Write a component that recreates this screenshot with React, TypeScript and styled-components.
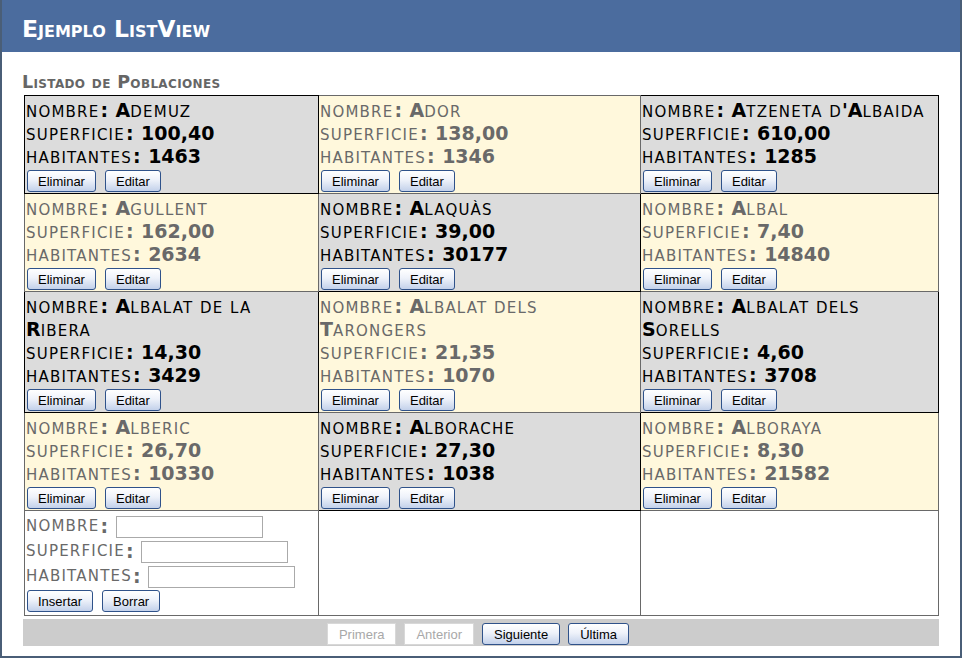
import React from "react";
import styled, { createGlobalStyle, css } from "styled-components";

const GlobalStyle = createGlobalStyle`
  html, body { margin: 0; padding: 0; background: #fff; }
  body { font-family: "DejaVu Sans", Verdana, sans-serif; }
`;

const Page = styled.div`
  width: 962px;
  height: 658px;
  box-sizing: border-box;
  border: 2px solid #4a5e77;
  border-top: none;
  background: #fff;
  overflow: hidden;
`;

const Header = styled.header`
  height: 52px;
  box-sizing: border-box;
  background: #4b6c9e;
  padding: 18px 0 0 20px;
`;

const Title = styled.h1`
  margin: 0;
  font-family: "DejaVu Sans", Verdana, sans-serif;
  font-size: 23.5px;
  line-height: 23px;
  font-weight: bold;
  font-variant: small-caps;
  color: #fff;
`;

const Main = styled.main`
  padding: 20px 0 0 20px;
`;

const SectionTitle = styled.h2`
  margin: 0 0 3px;
  font-size: 17.5px;
  letter-spacing: 0.35px;
  line-height: 20px;
  font-weight: bold;
  font-variant: small-caps;
  color: #666;
`;

const Grid = styled.table`
  border-collapse: collapse;
  table-layout: fixed;
  width: 914px;
  margin-left: 2px;
  background: #fff;
`;

type Kind = "item" | "alt" | "blank";

const Cell = styled.td<{ $kind: Kind }>`
  vertical-align: top;
  padding: 3px 4px 1px 1px;
  border: 1px solid currentColor;
  ${({ $kind }) =>
    $kind === "item"
      ? css`
          background: #dcdcdc;
          color: #000;
        `
      : $kind === "alt"
      ? css`
          background: #fff8dc;
          color: #696969;
        `
      : css`
          background: #fff;
          color: #696969;
        `}
`;

const Field = styled.div`
  font-size: 19px;
  line-height: 23px;
`;

const Small = styled.span`
  font-size: 15px;
  line-height: 15px;
  font-weight: normal;
  text-transform: uppercase;
  letter-spacing: 1.2px;
`;

const Strong = styled.span`
  font-weight: bold;
`;

const Colon = styled.span`
  font-weight: bold;
  padding: 0 1px;
`;

const Actions = styled.div<{ $top?: number; $bottom?: number }>`
  display: flex;
  gap: 9px;
  padding: ${({ $top = 2, $bottom = 0 }) => `${$top}px 0 ${$bottom}px 1px`};
`;

const Btn = styled.button`
  height: 22px;
  box-sizing: border-box;
  margin: 0;
  padding: 0 10px;
  font-family: "Liberation Sans", Arial, sans-serif;
  font-size: 13px;
  color: #000;
  border: 1px solid #2f528a;
  border-radius: 3px;
  background: linear-gradient(to bottom, #ffffff 0%, #eef2fa 45%, #c3d1ea 100%);
  cursor: pointer;
  &:disabled {
    background: #fff;
    border: 1px solid #d8d8d8;
    border-radius: 0;
    color: #a8a8a8;
    cursor: default;
  }
`;

const PagerBtn = styled(Btn)`
  padding: 0 11px;
`;

const InsertField = styled.div`
  display: flex;
  align-items: center;
  height: 25px;
  font-size: 19px;
  line-height: 23px;
  white-space: pre;
`;

const TextInput = styled.input`
  width: 147px;
  height: 22px;
  box-sizing: border-box;
  margin: 0;
  border: 1px solid #aaa;
  padding: 0 3px;
  font-family: "DejaVu Sans", Verdana, sans-serif;
  font-size: 13px;
`;

const Pager = styled.div`
  width: 916px;
  height: 27px;
  box-sizing: border-box;
  margin: 3px 0 0 1px;
  background: #ccc;
  display: flex;
  justify-content: center;
  gap: 8px;
  padding: 4px 6px 1px 0;
`;

function SmallCaps({ text }: { text: string }) {
  const runs = text.match(/\p{Ll}+|[^\p{Ll}]+/gu) || [];
  return (
    <>
      {runs.map((r, i) =>
        /\p{Ll}/u.test(r[0]) ? (
          <Small key={i}>{r}</Small>
        ) : (
          <Strong key={i}>{r}</Strong>
        )
      )}
    </>
  );
}

type Poblacion = { nombre: string; superficie: string; habitantes: string };

const data: Poblacion[] = [
  { nombre: "Ademuz", superficie: "100,40", habitantes: "1463" },
  { nombre: "Ador", superficie: "138,00", habitantes: "1346" },
  { nombre: "Atzeneta d'Albaida", superficie: "610,00", habitantes: "1285" },
  { nombre: "Agullent", superficie: "162,00", habitantes: "2634" },
  { nombre: "Alaquàs", superficie: "39,00", habitantes: "30177" },
  { nombre: "Albal", superficie: "7,40", habitantes: "14840" },
  { nombre: "Albalat de la Ribera", superficie: "14,30", habitantes: "3429" },
  { nombre: "Albalat dels Tarongers", superficie: "21,35", habitantes: "1070" },
  { nombre: "Albalat dels Sorells", superficie: "4,60", habitantes: "3708" },
  { nombre: "Alberic", superficie: "26,70", habitantes: "10330" },
  { nombre: "Alborache", superficie: "27,30", habitantes: "1038" },
  { nombre: "Alboraya", superficie: "8,30", habitantes: "21582" },
];

function ItemCell({ p, alt }: { p: Poblacion; alt: boolean }) {
  return (
    <Cell $kind={alt ? "alt" : "item"}>
      <Field>
        <Small>nombre</Small>
        <Colon>:</Colon>
        <Strong> </Strong>
        <SmallCaps text={p.nombre} />
      </Field>
      <Field>
        <Small>superficie</Small>
        <Colon>:</Colon>
        <Strong> {p.superficie}</Strong>
      </Field>
      <Field>
        <Small>habitantes</Small>
        <Colon>:</Colon>
        <Strong> {p.habitantes}</Strong>
      </Field>
      <Actions>
        <Btn>Eliminar</Btn>
        <Btn>Editar</Btn>
      </Actions>
    </Cell>
  );
}

function InsertCell() {
  return (
    <Cell $kind="blank">
      <InsertField>
        <Small>nombre</Small>
        <Colon>:</Colon>
        <Strong> </Strong>
        <TextInput type="text" />
      </InsertField>
      <InsertField>
        <Small>superficie</Small>
        <Colon>:</Colon>
        <Strong> </Strong>
        <TextInput type="text" />
      </InsertField>
      <InsertField>
        <Small>habitantes</Small>
        <Colon>:</Colon>
        <Strong> </Strong>
        <TextInput type="text" />
      </InsertField>
      <Actions $top={1} $bottom={2}>
        <Btn>Insertar</Btn>
        <Btn>Borrar</Btn>
      </Actions>
    </Cell>
  );
}

export default function App() {
  const rows: Poblacion[][] = [];
  for (let i = 0; i < data.length; i += 3) rows.push(data.slice(i, i + 3));
  return (
    <>
      <GlobalStyle />
      <Page>
        <Header>
          <Title>Ejemplo ListView</Title>
        </Header>
        <Main>
          <SectionTitle>Listado de Poblaciones</SectionTitle>
          <Grid>
            <colgroup>
              <col style={{ width: 294 }} />
              <col style={{ width: 322 }} />
              <col style={{ width: 298 }} />
            </colgroup>
            <tbody>
              {rows.map((row, r) => (
                <tr key={r}>
                  {row.map((p, c) => (
                    <ItemCell key={c} p={p} alt={(r * 3 + c) % 2 === 1} />
                  ))}
                </tr>
              ))}
              <tr>
                <InsertCell />
                <Cell $kind="blank" />
                <Cell $kind="blank" />
              </tr>
            </tbody>
          </Grid>
          <Pager>
            <PagerBtn disabled>Primera</PagerBtn>
            <PagerBtn disabled>Anterior</PagerBtn>
            <PagerBtn>Siguiente</PagerBtn>
            <PagerBtn>Última</PagerBtn>
          </Pager>
        </Main>
      </Page>
    </>
  );
}
